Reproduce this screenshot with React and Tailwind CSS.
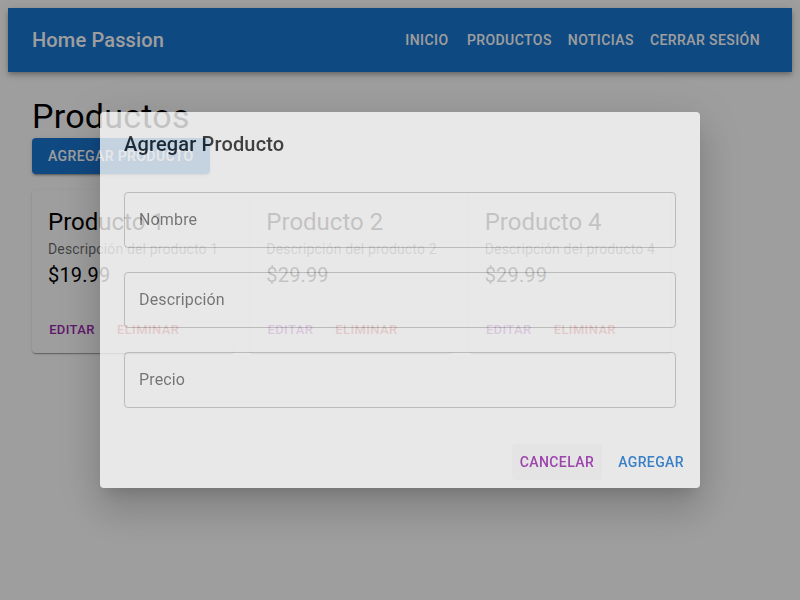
const links = ['Inicio', 'Productos', 'Noticias', 'Cerrar sesión'];

const products = [
  { name: 'Producto 1', desc: 'Descripción del producto 1', price: '$19.99' },
  { name: 'Producto 2', desc: 'Descripción del producto 2', price: '$29.99' },
  { name: 'Producto 4', desc: 'Descripción del producto 4', price: '$29.99' },
];

const fields = ['Nombre', 'Descripción', 'Precio'];

function ProductCard({ product }) {
  return (
    <div className="bg-white rounded shadow-[0px_2px_1px_-1px_rgba(0,0,0,0.2),0px_1px_1px_0px_rgba(0,0,0,0.14),0px_1px_3px_0px_rgba(0,0,0,0.12)]">
      <div className="p-4">
        <div className="text-2xl leading-[1.334] text-black">{product.name}</div>
        <div className="text-sm leading-[1.43] tracking-[0.01071em] text-black/60 whitespace-nowrap">{product.desc}</div>
        <div className="text-xl leading-[1.6] tracking-[0.0075em] text-black">{product.price}</div>
      </div>
      <div className="flex items-center gap-2 p-2">
        <button className="min-w-16 px-[5px] py-1 rounded text-[13px] leading-[1.75] font-medium uppercase tracking-[0.02857em] text-[#9c27b0]">
          Editar
        </button>
        <button className="min-w-16 px-[5px] py-1 rounded text-[13px] leading-[1.75] font-medium uppercase tracking-[0.02857em] text-[#d32f2f]">
          Eliminar
        </button>
      </div>
    </div>
  );
}

export default function App() {
  return (
    <div className="min-h-screen bg-white p-2 font-['Roboto',sans-serif] text-black/[0.87]">
      <header className="h-16 flex items-center px-6 bg-[#1976d2] text-white shadow-[0px_2px_4px_-1px_rgba(0,0,0,0.2),0px_4px_5px_0px_rgba(0,0,0,0.14),0px_1px_10px_0px_rgba(0,0,0,0.12)]">
        <h1 className="flex-1 text-xl font-medium leading-[1.6] tracking-[0.0075em]">Home Passion</h1>
        <nav className="flex">
          {links.map((l) => (
            <button key={l} className="min-w-16 px-2 py-1.5 text-sm font-medium uppercase leading-[1.75] tracking-[0.03em]">
              {l}
            </button>
          ))}
        </nav>
      </header>

      <main className="px-6 pt-6">
        <h2 className="text-[34px] leading-[1.235] tracking-[0.00735em] text-black">Productos</h2>
        <button className="px-4 py-1.5 rounded bg-[#1976d2] text-white text-sm font-medium uppercase leading-[1.75] tracking-[0.02857em] shadow-[0px_3px_1px_-2px_rgba(0,0,0,0.2),0px_2px_2px_0px_rgba(0,0,0,0.14),0px_1px_5px_0px_rgba(0,0,0,0.12)]">
          Agregar Producto
        </button>
        <div className="mt-4 flex items-start gap-4">
          {products.map((p) => (
            <ProductCard key={p.name} product={p} />
          ))}
        </div>
      </main>

      {/* backdrop, mid fade-in */}
      <div className="fixed inset-0 bg-black/[0.38]" />

      <div className="fixed inset-0 flex items-center justify-center">
        <div className="w-[600px] rounded bg-white opacity-[0.76] shadow-[0px_11px_15px_-7px_rgba(0,0,0,0.2),0px_24px_38px_3px_rgba(0,0,0,0.14),0px_9px_46px_8px_rgba(0,0,0,0.12)]">
          <h3 className="px-6 py-4 text-xl font-medium leading-[1.6] tracking-[0.0075em]">Agregar Producto</h3>
          <div className="flex flex-col gap-6 px-6 pt-4 pb-7">
            {fields.map((f) => (
              <div key={f} className="h-14 flex items-center px-[14px] rounded border border-black/[0.23] text-base text-black/60 tracking-[0.00938em]">
                {f}
              </div>
            ))}
          </div>
          <div className="flex justify-end gap-2 p-2">
            <button className="min-w-16 px-2 py-1.5 rounded bg-black/[0.02] text-[#9c27b0] text-sm font-medium uppercase leading-[1.75] tracking-[0.02857em]">
              Cancelar
            </button>
            <button className="min-w-16 px-2 py-1.5 rounded text-[#1976d2] text-sm font-medium uppercase leading-[1.75] tracking-[0.02857em]">
              Agregar
            </button>
          </div>
        </div>
      </div>
    </div>
  );
}
